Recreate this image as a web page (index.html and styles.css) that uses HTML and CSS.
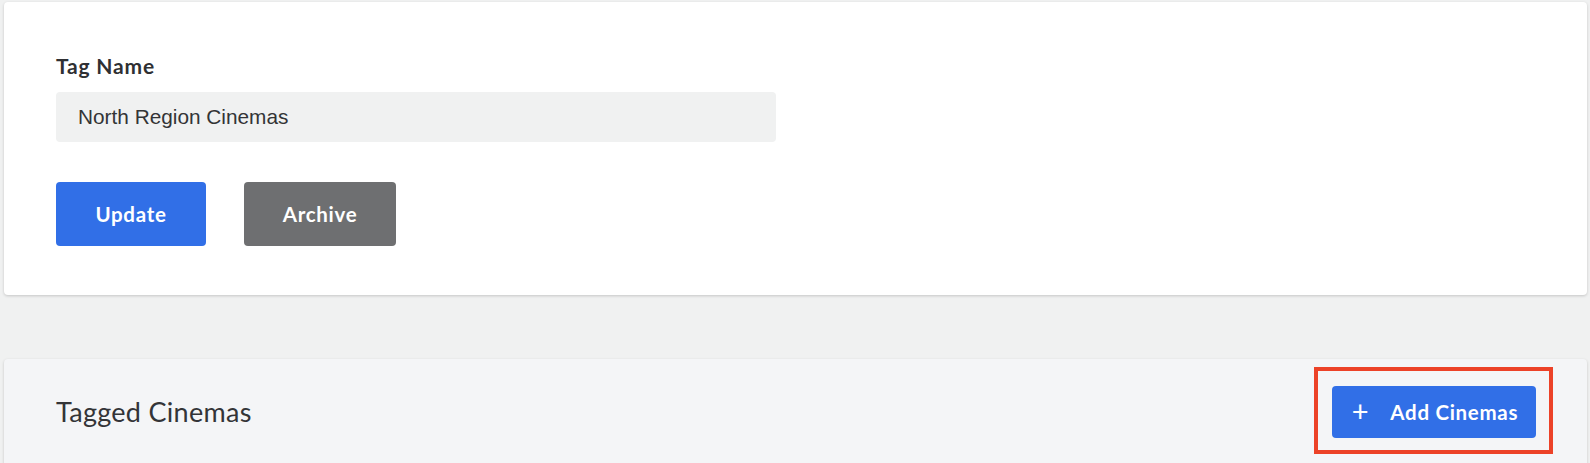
FILE: index.html
```html
<!DOCTYPE html>
<html>
<head>
<meta charset="utf-8">
<link rel="stylesheet" href="styles.css">
</head>
<body>
<div class="page">
  <section class="card form-card">
    <label class="field-label" for="tag">Tag Name</label>
    <div class="input" id="tag">North Region Cinemas</div>
    <div class="actions">
      <button class="btn btn-primary btn-update">Update</button>
      <button class="btn btn-secondary btn-archive">Archive</button>
    </div>
  </section>
  <section class="card list-card">
    <div class="list-header">
      <h2 class="list-title">Tagged Cinemas</h2>
      <button class="btn btn-primary btn-add"><span class="plus">+</span><span>Add Cinemas</span></button>
    </div>
  </section>
</div>
</body>
</html>
```
FILE: styles.css
```css
html, body {
  margin: 0;
  padding: 0;
  background: #f0f1f1;
  height: 100%;
  overflow: hidden;
}
.page {
  padding: 2px 3px 0 4px;
  display: flex;
  flex-direction: column;
  gap: 64px;
}
.card {
  background: #ffffff;
  border-radius: 4px;
  box-shadow: 0 1px 3px rgba(0,0,0,0.18);
}
.form-card {
  height: 293px;
  box-sizing: border-box;
  padding: 51px 52px 0 52px;
  display: flex;
  flex-direction: column;
}
.field-label {
  font-family: "Lato", sans-serif;
  font-weight: 700;
  font-size: 21px;
  letter-spacing: 0.8px;
  line-height: 25px;
  color: #2f3033;
}
.input {
  margin-top: 14px;
  width: 720px;
  height: 50px;
  box-sizing: border-box;
  background: #f0f1f1;
  border-radius: 4px;
  padding-left: 22px;
  display: flex;
  align-items: center;
  font-family: "Liberation Sans", Arial, sans-serif;
  font-size: 20.8px;
  color: #333436;
}
.actions {
  margin-top: 40px;
  display: flex;
  gap: 38px;
}
.btn {
  border: none;
  border-radius: 4px;
  color: #ffffff;
  font-family: "Lato", sans-serif;
  font-weight: 700;
  font-size: 20.5px;
  letter-spacing: 0.7px;
  padding: 0;
  display: flex;
  align-items: center;
  justify-content: center;
}
.btn-primary { background: #316fe7; }
.btn-secondary { background: #6e6f71; }
.btn-update { width: 150px; height: 64px; }
.btn-archive { width: 152px; height: 64px; }
.list-card {
  background: #f4f5f7;
  height: 120px;
}
.list-header {
  display: flex;
  align-items: center;
  justify-content: space-between;
  padding: 27px 51px 0 52px;
}
.list-title {
  margin: 0;
  font-family: "Lato", sans-serif;
  font-weight: 400;
  font-size: 27px;
  letter-spacing: 0.3px;
  line-height: 32px;
  color: #333437;
}
.btn-add {
  position: relative;
  width: 204px;
  height: 52px;
  gap: 21px;
}
.btn-add .plus {
  font-size: 29px;
  font-weight: 400;
  line-height: 1;
  margin-top: -3px;
  margin-left: 2px;
}
.btn-add::after {
  content: "";
  position: absolute;
  top: -19px;
  left: -18px;
  right: -17px;
  bottom: -16px;
  border: 4px solid #ec4228;
  pointer-events: none;
}
```
